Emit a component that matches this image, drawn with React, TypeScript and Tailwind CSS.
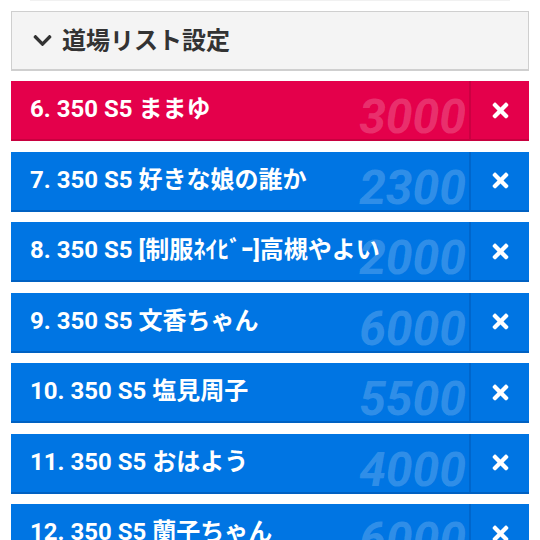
import React from 'react';
import { FaChevronDown, FaTimes } from 'react-icons/fa';

const DOJOS = [
  { no: 6, name: '350 S5 ままゆ', score: 3000, active: true },
  { no: 7, name: '350 S5 好きな娘の誰か', score: 2300 },
  { no: 8, name: '350 S5 [制服ﾈｲﾋﾞｰ]高槻やよい', score: 2000 },
  { no: 9, name: '350 S5 文香ちゃん', score: 6000 },
  { no: 10, name: '350 S5 塩見周子', score: 5500 },
  { no: 11, name: '350 S5 おはよう', score: 4000 },
  { no: 12, name: '350 S5 蘭子ちゃん', score: 6000 },
];

export default function App() {
  return (
    <div className="w-[540px] h-[540px] overflow-hidden bg-white font-['Roboto','Noto_Sans_CJK_JP',sans-serif]">
      <div className="mx-[30px] h-px bg-[#f1f1f1]" />
      <div className="px-[11px] pt-[10px]">
        <div className="h-[60px] flex items-center gap-[9px] pl-[20px] bg-[#f4f4f4] border border-b-2 border-[#cfcfcf] text-[#333]">
          <FaChevronDown size={21} />
          <span className="text-[24px] font-bold leading-none">道場リスト設定</span>
        </div>

        <div className="mt-[10px] flex flex-col gap-[10.5px]">
          {DOJOS.map((d) => (
            <div
              key={d.no}
              className={
                d.active
                  ? 'h-[60px] shrink-0 flex bg-[#e4004b] border-b-2 border-[#c8003f] text-white'
                  : 'h-[60px] shrink-0 flex bg-[#0075e3] border-b-2 border-[#0061c2] text-white'
              }
            >
              <div className="relative flex-1 overflow-hidden flex items-center pl-[19px]">
                <span className="absolute bottom-[-2px] right-[3px] text-[48px] font-bold italic leading-none text-white/20">
                  {d.score}
                </span>
                <span className="relative text-[24px] font-bold leading-none whitespace-nowrap pb-[2px]">
                  {d.no}. {d.name}
                </span>
              </div>
              <div
                className={
                  d.active
                    ? 'w-[60px] flex items-center justify-center border-l-2 border-[#cc0042]'
                    : 'w-[60px] flex items-center justify-center border-l-2 border-[#0066cc]'
                }
              >
                <FaTimes size={23} />
              </div>
            </div>
          ))}
        </div>
      </div>
    </div>
  );
}
